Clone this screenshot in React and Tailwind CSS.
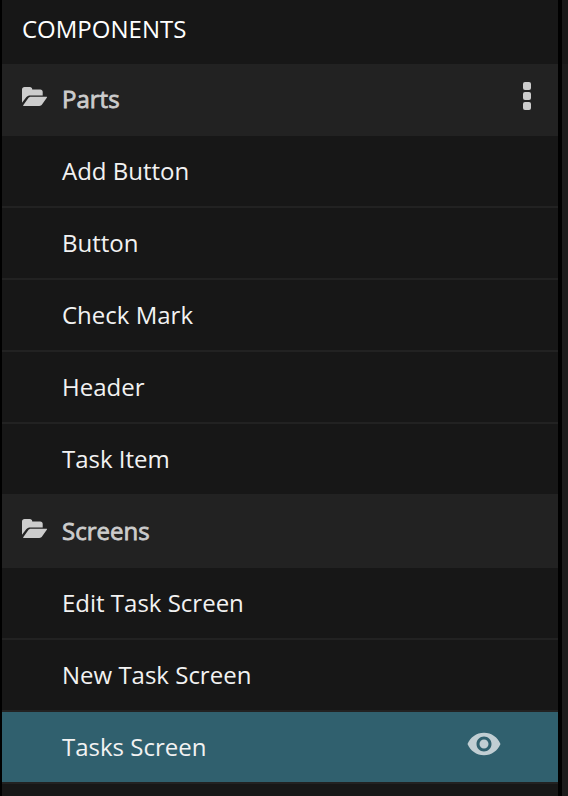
import React from "react";
import { MdVisibility } from "react-icons/md";

function FolderOpen() {
  return (
    <svg viewBox="0 0 25 19" className="h-[19px] w-[25px] shrink-0" fill="#cccccc">
      <path d="M0 2.5C0 1 1 0 2.5 0H7.8C9.3 0 10.2 1 10.2 2.2V2.6H18.2C19.8 2.6 20.7 3.5 20.7 5V8.400H8.200C6.500 8.400 5.300 9 4.200 10.300L0 15.800Z" />
      <path d="M1.200 18.200L6.200 11.200C6.900 10.200 7.800 9.700 9 9.700H24.400C25 9.700 25.200 10.200 24.800 10.800L20.200 17.200C19.500 18.400 18.600 18.900 17.300 18.900H1.600C1 18.900 0.900 18.600 1.200 18.200Z" />
    </svg>
  );
}

function GroupRow({ label, menu }) {
  return (
    <div className="flex h-[72px] shrink-0 items-center bg-[#222222] pl-5 pr-[27px]">
      <div className="pb-[7px]">
        <FolderOpen />
      </div>
      <span className="ml-[15px] flex-1 pb-[2px] text-[#cccccc] [-webkit-text-stroke:0.8px_#cccccc]">{label}</span>
      {menu && (
        <div className="flex flex-col gap-[2px] pb-2">
          <i className="size-[8.3px] rounded-[2px] bg-[#cccccc]" />
          <i className="size-[8.3px] rounded-[2px] bg-[#cccccc]" />
          <i className="size-[8.3px] rounded-[2px] bg-[#cccccc]" />
        </div>
      )}
    </div>
  );
}

function ItemRow({ label, active }) {
  return (
    <div
      className={`flex h-[72px] shrink-0 items-center border-b-2 border-[#222222] pl-[60px] pr-14 ${
        active ? "bg-[#30606e]" : "bg-[#171717]"
      }`}
    >
      <span className="flex-1 text-[#f2f2f2]">{label}</span>
      {active && <MdVisibility className="mb-[6px] size-9 text-[#c1ced3]" />}
    </div>
  );
}

const parts = ["Add Button", "Button", "Check Mark", "Header", "Task Item"];

export default function App() {
  return (
    <div className="flex h-[796px] w-[568px] overflow-hidden bg-black pl-[2px] font-['Open_Sans',sans-serif] text-[24px] leading-[34px]">
      <aside className="flex w-[556px] flex-col bg-[#171717]">
        <h2 className="flex h-16 shrink-0 items-center pb-[7px] pl-5 text-white">COMPONENTS</h2>
        <GroupRow label="Parts" menu />
        {parts.map((name) => (
          <ItemRow key={name} label={name} />
        ))}
        <GroupRow label="Screens" />
        <ItemRow label="Edit Task Screen" />
        <ItemRow label="New Task Screen" />
        <ItemRow label="Tasks Screen" active />
      </aside>
      <div className="ml-1 flex w-[6px] flex-col bg-[#1c1c1c]">
        <div className="h-16 bg-[#181818]" />
      </div>
    </div>
  );
}
